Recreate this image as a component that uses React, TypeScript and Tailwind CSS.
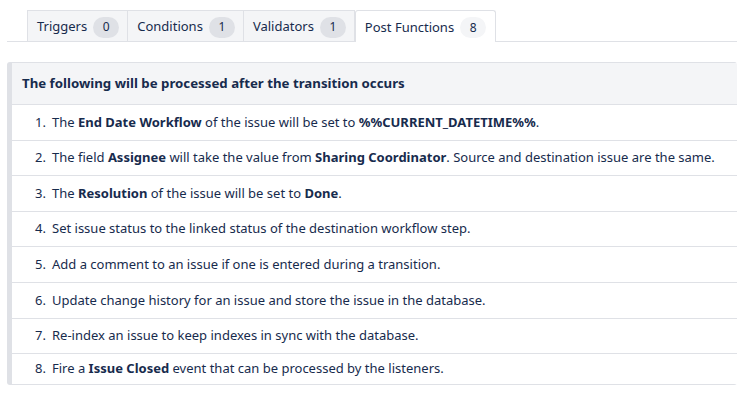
import React from "react";

const tabs = [
  { label: "Triggers", count: 0 },
  { label: "Conditions", count: 1 },
  { label: "Validators", count: 1 },
  { label: "Post Functions", count: 8, active: true },
];

const items: React.ReactNode[] = [
  <>The <b>End Date Workflow</b> of the issue will be set to <b>%%CURRENT_DATETIME%%</b>.</>,
  <>The field <b>Assignee</b> will take the value from <b>Sharing Coordinator</b>. Source and destination issue are the same.</>,
  <>The <b>Resolution</b> of the issue will be set to <b>Done</b>.</>,
  <>Set issue status to the linked status of the destination workflow step.</>,
  <>Add a comment to an issue if one is entered during a transition.</>,
  <>Update change history for an issue and store the issue in the database.</>,
  <>Re-index an issue to keep indexes in sync with the database.</>,
  <>Fire a <b>Issue Closed</b> event that can be processed by the listeners.</>,
];

export default function App() {
  return (
    <div
      className="h-[400px] w-[737px] overflow-hidden bg-white text-[#172b4d]"
      style={{ fontFamily: '"Noto Sans", "Open Sans", sans-serif' }}
    >
      {/* Tabs */}
      <div className="ml-[7px] mt-[10px] flex border-b border-[#dfe1e6] pl-[20px]">
        {tabs.map((t) => (
          <div
            key={t.label}
            className={
              t.active
                ? "-mb-px flex h-[32px] items-center gap-[6px] rounded-t-[3px] border border-b-0 border-[#dfe1e6] bg-white pl-[9px] pr-[9px] pt-[2px] text-[13px]"
                : "flex h-[31px] items-center gap-[6px] border border-l-0 border-b-0 border-[#dfe1e6] bg-[#f4f5f7] pl-[9px] pr-[8px] pt-[2px] text-[13px] first:border-l"
            }
          >
            <span>{t.label}</span>
            <span
              className={
                (t.active ? "bg-[#f4f5f7]" : "bg-[#dfe1e6]") +
                " flex h-[21px] min-w-[26px] items-center justify-center rounded-full px-[8px] text-[12px]"
              }
            >
              {t.count}
            </span>
          </div>
        ))}
      </div>

      {/* Panel */}
      <div className="ml-[7px] mt-[20px] overflow-hidden rounded-[3px] border-l-[5px] border-[#dfe1e6]">
        <div className="flex h-[43px] items-center border-y border-[#dfe1e6] bg-[#f4f5f7] pl-[10px] text-[13.25px] font-bold">
          The following will be processed after the transition occurs
        </div>
        <ol>
          {items.map((it, i) => (
            <li
              key={i}
              className={
                (i === items.length - 1 ? "h-[31px]" : "h-[35.6px]") +
                " flex items-center border-b border-[#dfe1e6] text-[13px]"
              }
            >
              <span className="w-[40px] shrink-0 pr-[6px] text-right">{i + 1}.</span>
              <span className="whitespace-nowrap">{it}</span>
            </li>
          ))}
        </ol>
      </div>
    </div>
  );
}
